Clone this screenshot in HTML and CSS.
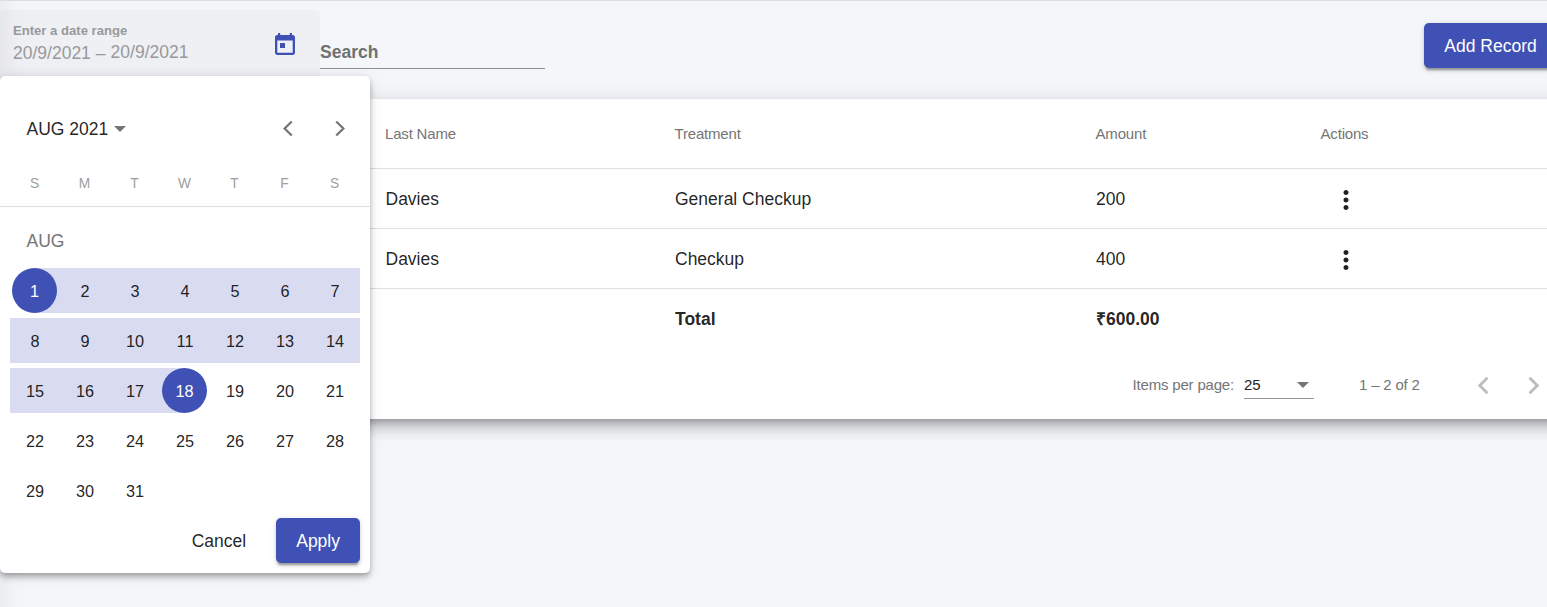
FILE: index.html
```html
<!DOCTYPE html>
<html lang="en">
<head>
<meta charset="utf-8">
<title>Records</title>
<link rel="stylesheet" href="styles.css">
</head>
<body>
<main class="page">
  <header class="toolbar">
    <div class="date-field">
      <div class="date-text">
        <span class="date-label">Enter a date range</span>
        <div class="date-value"><span>20/9/2021</span><span class="dash">–</span><span class="end">20/9/2021</span></div>
      </div>
      <svg class="calendar-icon" viewBox="0 0 20 22"><path fill-rule="evenodd" d="M3 0h2.2v2h9.6V0H17v2h.8C19 2 20 3 20 4.200V19.800C20 21 19 22 17.800 22H2.200C1 22 0 21 0 19.800V4.200C0 3 1 2 2.200 2H3zM2.300 7.500v12.200h15.400V7.500zM5 10h5v5H5z"/></svg>
    </div>
    <div class="search">Search</div>
    <button class="button primary add">Add Record</button>
  </header>

  <section class="card">
    <div class="row head"><span></span><span>Last Name</span><span>Treatment</span><span>Amount</span><span>Actions</span></div>
    <div class="row"><span></span><span>Davies</span><span>General Checkup</span><span>200</span><svg class="more" viewBox="0 0 24 24"><path d="M12 8c1.1 0 2-.9 2-2s-.9-2-2-2-2 .9-2 2 .9 2 2 2zm0 2c-1.1 0-2 .9-2 2s.9 2 2 2 2-.9 2-2-.9-2-2-2zm0 6c-1.1 0-2 .9-2 2s.9 2 2 2 2-.9 2-2-.9-2-2-2z"/></svg></div>
    <div class="row"><span></span><span>Davies</span><span>Checkup</span><span>400</span><svg class="more" viewBox="0 0 24 24"><path d="M12 8c1.1 0 2-.9 2-2s-.9-2-2-2-2 .9-2 2 .9 2 2 2zm0 2c-1.1 0-2 .9-2 2s.9 2 2 2 2-.9 2-2-.9-2-2-2zm0 6c-1.1 0-2 .9-2 2s.9 2 2 2 2-.9 2-2-.9-2-2-2z"/></svg></div>
    <div class="row total"><span></span><span></span><span>Total</span><span>₹600.00</span></div>
    <div class="paginator">
      <span class="per-page">Items per page:</span>
      <div class="select"><span>25</span><i class="caret"></i></div>
      <span class="range">1 – 2 of 2</span>
      <svg class="page-arrow" viewBox="0 0 24 24"><path d="M15.41 7.41L14 6l-6 6 6 6 1.41-1.41L10.83 12z"/></svg>
      <svg class="page-arrow" viewBox="0 0 24 24"><path d="M10 6L8.59 7.41 13.17 12l-4.58 4.59L10 18l6-6z"/></svg>
    </div>
  </section>
</main>
<div class="side-shade"></div>

<aside class="calendar">
  <div class="cal-head">
    <span class="period">AUG 2021</span><i class="caret"></i>
    <svg class="cal-arrow prev" viewBox="0 0 20 20"><path d="M12.6 4.400L6.900 10l5.700 5.600"/></svg>
    <svg class="cal-arrow" viewBox="0 0 20 20"><path d="M7.400 4.400L13.100 10l-5.700 5.600"/></svg>
  </div>
  <div class="weekdays"><span>S</span><span>M</span><span>T</span><span>W</span><span>T</span><span>F</span><span>S</span></div>
  <div class="month">AUG</div>
  <div class="days">
    <span class="in start"><b>1</b></span><span class="in">2</span><span class="in">3</span><span class="in">4</span><span class="in">5</span><span class="in">6</span><span class="in">7</span>
    <span class="in">8</span><span class="in">9</span><span class="in">10</span><span class="in">11</span><span class="in">12</span><span class="in">13</span><span class="in">14</span>
    <span class="in">15</span><span class="in">16</span><span class="in">17</span><span class="in finish"><b>18</b></span><span>19</span><span>20</span><span>21</span>
    <span>22</span><span>23</span><span>24</span><span>25</span><span>26</span><span>27</span><span>28</span>
    <span>29</span><span>30</span><span>31</span>
  </div>
  <div class="actions"><button class="button">Cancel</button><button class="button primary">Apply</button></div>
</aside>
</body>
</html>
```
FILE: styles.css
```css
* { box-sizing: border-box; }
body {
  margin: 0;
  height: 607px;
  overflow: hidden;
  position: relative;
  background: #f4f6fa;
  color: rgba(0, 0, 0, .87);
  font: 17.5px/20px "Liberation Sans", Arial, sans-serif;
}
.page { border-top: 1px solid #dcdde1; }

.toolbar { display: flex; height: 98px; }
.date-field {
  display: flex;
  justify-content: space-between;
  width: 320px;
  height: 80px;
  margin-top: 9px;
  padding: 12px 25px 0 13px;
  border-radius: 5px 5px 0 0;
  background: #eff0f4;
  color: #98999c;
}
.date-text { display: flex; flex-direction: column; }
.date-label { height: 15px; overflow: hidden; font-size: 13.1px; line-height: 17px; font-weight: bold; }
.date-value { display: flex; padding-top: 6px; }
.dash { padding: 0 5px; }
.end { margin-top: -1px; }
.calendar-icon { width: 20px; height: 22px; margin-top: 11px; fill: #3f51b5; }
.search {
  width: 225px;
  height: 68px;
  padding-top: 41px;
  border-bottom: 1px solid #8d8e91;
  color: #707173;
  font-size: 17.5px;
  font-weight: bold;
}
.button {
  height: 45px;
  padding: 0 20px;
  border: 0;
  border-radius: 5px;
  background: none;
  color: rgba(0, 0, 0, .87);
  font: inherit;
  white-space: nowrap;
}
.primary {
  background: #3f51b5;
  color: #fff;
  box-shadow: 0 3.75px 1.25px -2.5px rgba(0,0,0,.2), 0 2.5px 2.5px rgba(0,0,0,.14), 0 1.25px 6.25px rgba(0,0,0,.12);
}
.add { width: 133px; margin: 22px -10px 0 auto; }

.card {
  height: 320px;
  margin-right: -40px;
  background: #fff;
  box-shadow: 0 6.25px 6.25px -3.75px rgba(0,0,0,.2), 0 10px 12.5px 1.25px rgba(0,0,0,.14), 0 3.75px 17.5px 2.5px rgba(0,0,0,.12);
}
.row {
  display: grid;
  grid-template-columns: 385.5px 289.5px 421px 225px 1fr;
  align-items: center;
  height: 60px;
  border-bottom: 1px solid #e0e0e0;
}
.head { height: 70px; color: #757575; font-size: 15px; letter-spacing: -.18px; }
.head span { margin-left: -.5px; }
.total { border: 0; font-weight: bold; }
.more { width: 30px; height: 30px; margin: 2px 0 0 10px; fill: #212121; }
.paginator { display: flex; align-items: center; height: 72px; padding-left: 1132.5px; color: #757575; font-size: 15px; letter-spacing: -.18px; }
.per-page { width: 111.5px; }
.select {
  display: flex;
  align-items: center;
  justify-content: space-between;
  width: 70px;
  height: 27px;
  padding: 0 5px 0 0;
  border-bottom: 1px solid #949494;
  color: #212121;
}
.range { width: 106.500px; margin-left: 45px; }
.caret { border: 6.25px solid transparent; border-top-color: #757575; border-bottom: 0; }
.page-arrow { width: 35px; height: 35px; margin: 1px 15px 0 0; fill: #bdbdbd; flex: none; }

.side-shade {
  position: absolute;
  left: 0;
  top: 1px;
  width: 28px;
  height: 606px;
  background: linear-gradient(to right, rgba(0,0,0,.04), rgba(0,0,0,.012) 50%, transparent);
}

.calendar {
  position: absolute;
  left: 0;
  top: 76px;
  width: 370px;
  height: 497px;
  border-radius: 5px;
  background: #fff;
  box-shadow: 0 2.5px 5px -1.25px rgba(0,0,0,.2), 0 5px 6.25px rgba(0,0,0,.14), 0 1.25px 12.5px rgba(0,0,0,.12);
}
.cal-head { display: flex; align-items: center; height: 105px; padding: 0 18.500px 0 26.500px; }
.cal-head .caret { margin-left: 6px; }
.cal-arrow { width: 25px; height: 25px; fill: none; stroke: #757575; stroke-width: 1.8; }
.prev { margin: 0 26px 0 auto; }
.weekdays {
  display: grid;
  grid-template-columns: repeat(7, 50px);
  height: 26px;
  padding: 0 10px 0 9.500px;
  border-bottom: 1px solid #e0e0e0;
  color: #9e9e9e;
  font-size: 13.75px;
  line-height: 5px;
  text-align: center;
}
.month { height: 61px; padding: 24px 0 0 26.500px; color: #757575; }
.days {
  display: grid;
  grid-template-columns: repeat(7, 50px);
  grid-auto-rows: 45px;
  row-gap: 5px;
  padding: 0 10px;
  font-size: 16.25px;
  line-height: 46px;
  text-align: center;
}
.in { background: #d9dbf0; }
.start { background: linear-gradient(to right, #fff 50%, #d9dbf0 50%); }
.finish { background: linear-gradient(to right, #d9dbf0 50%, #fff 50%); }
.days b { display: block; width: 45px; height: 45px; margin-left: 2px; border-radius: 50%; background: #3f51b5; color: #fff; font-weight: normal; }
.actions { display: flex; justify-content: flex-end; gap: 10px; padding: 5px 10px 0; }
```
